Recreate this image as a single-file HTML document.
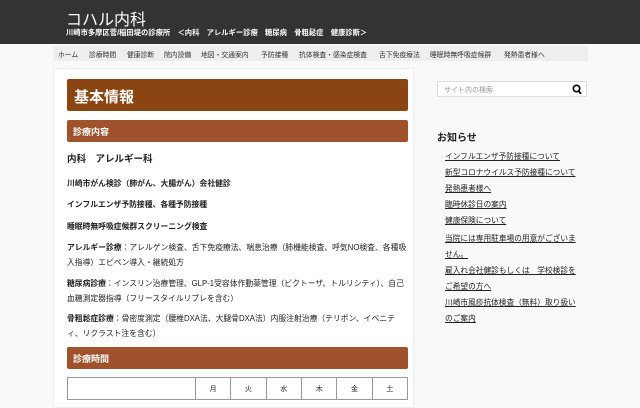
<!DOCTYPE html>
<html><head><meta charset="utf-8"><style>
*{margin:0;padding:0;box-sizing:border-box}
body{width:640px;height:400px;overflow:hidden;background:#f9f9f9;font-family:"Liberation Sans","Noto Sans CJK JP",sans-serif;color:#222;position:relative}
.hd{position:absolute;left:0;top:0;width:640px;height:44px;background:#333;color:#fff}
.hd .t{position:absolute;left:66px;top:6px;font-size:16px}
.hd .s{position:absolute;left:66px;top:28px;font-size:7.3px;font-weight:bold}
.nav{position:absolute;left:53px;top:46px;width:535px;height:15px;background:#eee;font-size:6.8px;color:#333;white-space:nowrap}
.nav span{position:absolute;top:3px}
.main{position:absolute;left:53px;top:68px;width:361px;height:340px;background:#fff;border:1px solid #eee}
.h1{position:absolute;left:67px;top:79px;width:341px;height:32px;background:#8b4513;color:#fff;font-size:15px;font-weight:bold;padding:7px 7px;border-radius:2px}
.h2{position:absolute;left:67px;width:341px;height:22px;background:#a0522d;color:#fff;font-size:9px;font-weight:bold;padding:5px 6px;border-radius:2px}
.p{position:absolute;left:67px;width:340px;font-size:7.8px;line-height:15px;font-weight:bold}
.p span{font-weight:normal}
.side{position:absolute;left:437px;top:81px;width:150px;height:16px;background:#fff;border:1px solid #ddd;font-size:7px;color:#999;padding:3px 6px}
.news{position:absolute;left:445px;font-size:7.7px;text-decoration:underline;color:#222;width:136px;line-height:11px}
table{position:absolute;left:67px;top:377px;width:341px;border-collapse:collapse;font-size:7px}
td{border:1px solid #999;height:22px;text-align:center}
</style></head><body>
<div class="hd"><div class="t">コハル内科</div><div class="s">川崎市多摩区菅/稲田堤の診療所　＜内科　アレルギー診療　糖尿病　骨粗鬆症　健康診断＞</div></div>
<div class="nav"><span style="left:5px">ホーム</span><span style="left:36px">診療時間</span><span style="left:74px">健康診断</span><span style="left:111px">院内設備</span><span style="left:148px">地図・交通案内</span><span style="left:208px">予防接種</span><span style="left:246px">抗体検査・感染症検査</span><span style="left:326px">舌下免疫療法</span><span style="left:377px">睡眠時無呼吸症候群</span><span style="left:451px">発熱患者様へ</span></div>
<div class="main"></div>
<div class="h1">基本情報</div>
<div class="h2" style="top:120px">診療内容</div>
<div class="p" style="top:152px;font-size:9.5px">内科　アレルギー科</div>
<div class="p" style="top:176px">川崎市がん検診（肺がん、大腸がん）会社健診</div>
<div class="p" style="top:197px">インフルエンザ予防接種、各種予防接種</div>
<div class="p" style="top:219px">睡眠時無呼吸症候群スクリーニング検査</div>
<div class="p" style="top:240px">アレルギー診療<span>：アレルゲン検査、舌下免疫療法、喘息治療（肺機能検査、呼気NO検査、各種吸入指導）エピペン導入・継続処方</span></div>
<div class="p" style="top:276px">糖尿病診療<span>：インスリン治療管理、GLP-1受容体作動薬管理（ビクトーザ、トルリシティ）、自己血糖測定器指導（フリースタイルリブレを含む）</span></div>
<div class="p" style="top:311px">骨粗鬆症診療<span>：骨密度測定（腰椎DXA法、大腿骨DXA法）内服注射治療（テリボン、イベニティ、リクラスト注を含む）</span></div>
<div class="h2" style="top:347px">診療時間</div>
<table><tr><td style="width:128px"></td><td>月</td><td>火</td><td>水</td><td>木</td><td>金</td><td>土</td></tr></table>
<div class="side">サイト内の検索<svg style="position:absolute;right:4px;top:2px" width="10" height="11" viewBox="0 0 10 11"><circle cx="4.5" cy="4.5" r="3.2" fill="none" stroke="#000" stroke-width="1.6"/><path d="M6.5 6.8L9 9.8" stroke="#000" stroke-width="1.8"/></svg></div>
<div style="position:absolute;left:437px;top:129px;font-size:10px;font-weight:bold">お知らせ</div>
<div class="news" style="top:151px">インフルエンザ予防接種について</div>
<div class="news" style="top:167px">新型コロナウイルス予防接種について</div>
<div class="news" style="top:183px">発熱患者様へ</div>
<div class="news" style="top:199px">臨時休診日の案内</div>
<div class="news" style="top:215px">健康保険について</div>
<div class="news" style="top:231px;line-height:16px">当院には専用駐車場の用意がございません。</div>
<div class="news" style="top:263px;line-height:16px">雇入れ会社健診もしくは　学校検診をご希望の方へ</div>
<div class="news" style="top:295px;line-height:16px">川崎市風疹抗体検査（無料）取り扱いのご案内</div>
</body></html>
